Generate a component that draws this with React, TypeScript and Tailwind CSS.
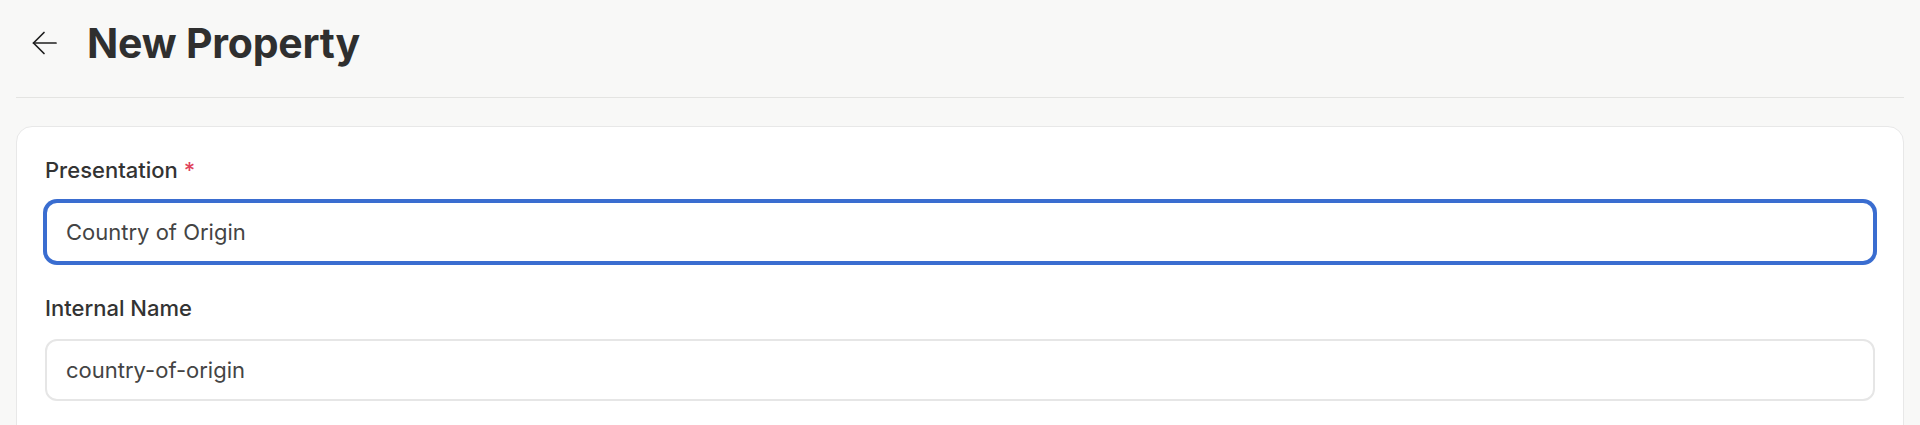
const fields = [
  { label: "Presentation", required: true, value: "Country of Origin", focused: true },
  { label: "Internal Name", required: false, value: "country-of-origin", focused: false },
];

function BackArrow() {
  return (
    <svg width="25" height="24" viewBox="0 0 25 24" fill="none" stroke="#1f1f1f" strokeWidth="1.7" strokeLinecap="round" strokeLinejoin="round">
      <path d="M12 1.5 1.5 12 12 22.5" />
      <path d="M1.5 12H24" />
    </svg>
  );
}

export default function App() {
  return (
    <div className="min-h-screen bg-[#f8f8f7] font-['Inter','Noto_Sans',sans-serif] text-[#333]">
      <div className="mx-4">
        {/* Header */}
        <div className="flex items-center gap-[30px] border-b border-[#e4e4e2] px-4 pt-[19px] pb-[30px]">
          <button className="flex items-center">
            <BackArrow />
          </button>
          <h1 className="text-[41px] leading-[48px] font-bold tracking-[-0.2px] text-[#2f2f2f]">New Property</h1>
        </div>

        {/* Form card */}
        <div className="mt-7 rounded-2xl border border-[#e8e8e8] bg-white px-7 pt-7 pb-10">
          <div className="flex flex-col gap-[30px]">
            {fields.map((field) => (
              <div key={field.label} className="flex flex-col gap-4">
                <label className="text-[22px] leading-[30px] font-medium text-[#333]">
                  {field.label}
                  {field.required && <span className="ml-1.5 text-[#e0435c]">*</span>}
                </label>
                <input
                  readOnly
                  value={field.value}
                  className={
                    field.focused
                      ? "h-[62px] w-full rounded-xl border-2 border-[#3a6dd0] bg-white px-[19px] text-[22px] text-[#444] outline-none ring-2 ring-[#3a6dd0]"
                      : "h-[62px] w-full rounded-xl border-2 border-[#e6e6e6] bg-white px-[19px] text-[22px] text-[#444] outline-none"
                  }
                />
              </div>
            ))}
          </div>
        </div>
      </div>
    </div>
  );
}
